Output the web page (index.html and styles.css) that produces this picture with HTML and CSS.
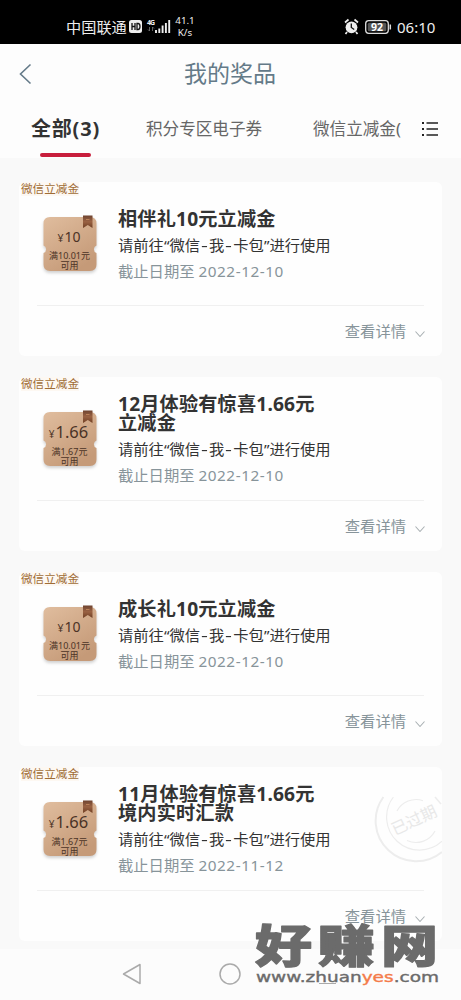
FILE: index.html
```html
<!DOCTYPE html>
<html lang="zh-CN">
<head>
<meta charset="utf-8">
<title>我的奖品</title>
<link rel="stylesheet" href="styles.css">
</head>
<body>
<svg class="defs" width="0" height="0" aria-hidden="true">
  <defs>
    <linearGradient id="gold" x1="0" y1="0" x2="0.6" y2="1">
      <stop offset="0" stop-color="#e0bd9e"/><stop offset="1" stop-color="#c59a78"/>
    </linearGradient>
    <linearGradient id="brown" x1="0" y1="0" x2="0" y2="1">
      <stop offset="0" stop-color="#6f4430"/><stop offset="0.5" stop-color="#9a6243"/><stop offset="1" stop-color="#6f3f24"/>
    </linearGradient>
    <symbol id="ticket" viewBox="0 0 58 62">
      <path d="M8 3H48Q54.500 3 54.500 9.500V31.500A4 4 0 0 0 54.500 39V50.500Q54.500 57 48 57H8Q1.500 57 1.500 50.500V39A4 4 0 0 0 1.500 31.500V9.500Q1.500 3 8 3Z" fill="url(#gold)"/>
      <path d="M41 1.500H50.500V14L45.800 11L41 14Z" fill="url(#brown)"/>
      <path d="M44 5.500H47.500" stroke="#b98058" stroke-width="1"/>
    </symbol>
    <symbol id="down" viewBox="0 0 12 8"><path d="M1.500 1.500L6 6.500L10.500 1.500" fill="none" stroke="#a9b0b3" stroke-width="1.100"/></symbol>
  </defs>
</svg>
<div class="phone">
  <header class="status">
    <span class="carrier">中国联通</span>
    <svg class="signal" width="43" height="22" viewBox="0 0 43 22">
      <rect x="0" y="4" width="13" height="13" rx="2.500" fill="#eee"/>
      <path d="M3 7V14M6 7V14M3 10.500H6M8 7.500V13.500H9Q11 13.500 11 10.500T9 7.500Z" fill="none" stroke="#111" stroke-width="1.300"/>
      <text x="18" y="8.800" class="net" textLength="8">4G</text>
      <path d="M20.500 11V15L19 13.500M23.500 15V11L25 12.500" fill="none" stroke="#777" stroke-width="0.800"/>
      <path d="M27 14V17M30.300 12.500V17M33.600 9.500V17M36.900 7V17M40.200 4V17" stroke="#eee" stroke-width="1.900"/>
    </svg>
    <span class="speed">41.1<br>K/s</span>
    <svg class="sys" width="48" height="20" viewBox="0 0 48 20">
      <circle cx="7.500" cy="10.300" r="5.900" fill="#eee"/>
      <path d="M1 5.500L4.500 2.500M14 5.500L10.500 2.500M3 15L1.500 17M12 15L13.500 17" stroke="#eee" stroke-width="1.700"/>
      <path d="M7.300 6.500V10.500L10.200 12.500" fill="none" stroke="#111" stroke-width="1.300"/>
      <rect x="21.700" y="3.700" width="22.600" height="12.600" rx="3" fill="none" stroke="#ddd" stroke-width="1.300"/>
      <rect x="23.800" y="5.700" width="18.500" height="8.600" rx="1.500" fill="#555"/>
      <path d="M46.300 7.500V12.500" stroke="#ddd" stroke-width="1.500"/>
      <text x="33" y="13.600" class="battery" text-anchor="middle">92</text>
    </svg>
    <span class="clock">06:10</span>
  </header>
  <div class="titlebar">
    <svg class="back" width="14" height="22" viewBox="0 0 14 22"><path d="M11.500 1.500L1.500 11L11.500 20.500" fill="none" stroke="#647a88" stroke-width="1.600"/></svg>
    <h1>我的奖品</h1>
  </div>
  <nav class="tabs">
    <div class="tab active">全部(3)</div>
    <div class="tab area">积分专区电子券</div>
    <div class="tab wx">微信立减金(</div>
    <svg class="list" width="18" height="16" viewBox="0 0 18 16"><path d="M5.500 2H17M5.500 8H17M5.500 14H17" stroke="#222" stroke-width="1.600"/><path d="M1 2H3M1 8H3M1 14H3" stroke="#222" stroke-width="2"/></svg>
  </nav>
  <main class="cards">
    <article class="card">
      <span class="tag">微信立减金</span>
      <div class="body">
        <div class="coupon"><svg width="58" height="62"><use href="#ticket"/></svg><div class="face"><b><i>¥</i>10</b><p>满10.01元<br>可用</p></div></div>
        <div class="info"><h2>相伴礼10元立减金</h2><p class="use">请前往“微信<s>-</s>我<s>-</s>卡包”进行使用</p><p class="date">截止日期至 <span>2022-12-10</span></p></div>
      </div>
      <div class="more">查看详情<svg width="12" height="8"><use href="#down"/></svg></div>
    </article>
    <article class="card">
      <span class="tag">微信立减金</span>
      <div class="body">
        <div class="coupon wide"><svg width="58" height="62"><use href="#ticket"/></svg><div class="face"><b><i>¥</i>1.66</b><p>满1.67元<br>可用</p></div></div>
        <div class="info"><h2>12月体验有惊喜1.66元<br>立减金</h2><p class="use">请前往“微信<s>-</s>我<s>-</s>卡包”进行使用</p><p class="date">截止日期至 <span>2022-12-10</span></p></div>
      </div>
      <div class="more">查看详情<svg width="12" height="8"><use href="#down"/></svg></div>
    </article>
    <article class="card">
      <span class="tag">微信立减金</span>
      <div class="body">
        <div class="coupon"><svg width="58" height="62"><use href="#ticket"/></svg><div class="face"><b><i>¥</i>10</b><p>满10.01元<br>可用</p></div></div>
        <div class="info"><h2>成长礼10元立减金</h2><p class="use">请前往“微信<s>-</s>我<s>-</s>卡包”进行使用</p><p class="date">截止日期至 <span>2022-12-10</span></p></div>
      </div>
      <div class="more">查看详情<svg width="12" height="8"><use href="#down"/></svg></div>
    </article>
    <article class="card">
      <span class="tag">微信立减金</span>
      <svg class="stamp" width="68" height="86" viewBox="0 0 68 86">
        <g fill="none" stroke="#ededed">
          <path d="M9.400 20A40.500 40.500 0 0 0 68 75" stroke-width="2"/>
          <path d="M19.400 20A33 33 0 0 0 68 64.300" stroke-width="1.200"/>
          <path d="M23 34A21.500 21.500 0 0 1 49 23.700M33 63.500A21.500 21.500 0 0 0 61 54" stroke-width="1.200"/>
          <path d="M61 20L67 27" stroke-width="1.500"/>
        </g>
        <text x="40" y="49" text-anchor="middle" transform="rotate(-25 40 43)">已过期</text>
      </svg>
      <div class="body">
        <div class="coupon wide"><svg width="58" height="62"><use href="#ticket"/></svg><div class="face"><b><i>¥</i>1.66</b><p>满1.67元<br>可用</p></div></div>
        <div class="info"><h2>11月体验有惊喜1.66元<br>境内实时汇款</h2><p class="use">请前往“微信<s>-</s>我<s>-</s>卡包”进行使用</p><p class="date">截止日期至 <span>2022-11-12</span></p></div>
      </div>
      <div class="more">查看详情<svg width="12" height="8"><use href="#down"/></svg></div>
    </article>
  </main>
  <footer class="sysnav">
    <svg width="22" height="24" viewBox="0 0 22 24"><path d="M19 2.500V21.500L2.500 12Z" fill="none" stroke="#aaa" stroke-width="1.500" stroke-linejoin="round"/></svg>
    <svg width="24" height="24" viewBox="0 0 24 24"><circle cx="12" cy="12" r="10" fill="none" stroke="#aaa" stroke-width="1.500"/></svg>
    <svg width="22" height="24" viewBox="0 0 22 24"><path d="M2 21.500H19" fill="none" stroke="#aaa" stroke-width="1"/></svg>
  </footer>
  <svg class="watermark" width="190" height="80" viewBox="0 0 190 80">
    <text class="brand" transform="translate(3 53.500) scale(1 0.800)" x="0 63 126" y="0">好赚网</text>
    <text class="site" x="4" y="73" textLength="183" lengthAdjust="spacingAndGlyphs">www.zhuan<tspan class="hot">yes</tspan>.com</text>
  </svg>
</div>
</body>
</html>
```
FILE: styles.css
```css
* { box-sizing: border-box; margin: 0; padding: 0; }
body { background: #f9f9f9; font-family: "Noto Sans", "Noto Sans CJK SC", sans-serif; color: #333; }
.defs { position: absolute; }
.phone { position: relative; width: 461px; height: 1000px; overflow: hidden; display: flex; flex-direction: column; }
svg { display: block; flex: none; }

.status { height: 44px; flex: none; background: #000; color: #eee; display: flex; align-items: center; padding: 10px 25px 0 66px; white-space: nowrap; }
.carrier { font-size: 15.2px; width: 63px; line-height: 20px; }
.net { font: bold 7px "Noto Sans", sans-serif; fill: #eee; }
.speed { font-size: 9.8px; line-height: 12px; margin-left: 2px; width: 22px; text-align: center; }
.sys { margin-left: auto; }
.battery { font: bold 10.5px "Noto Sans", sans-serif; fill: #fff; }
.clock { font-size: 15px; line-height: 20px; margin-left: 5px; width: 39px; }

.titlebar { height: 60px; flex: none; background: #fdfdfd; display: flex; align-items: center; padding-left: 19px; }
.titlebar h1 { flex: 1; margin: -3px 34px 0 0; text-align: center; font-size: 23px; line-height: 30px; font-weight: 400; color: #647a88; }

.tabs { height: 54px; flex: none; background: #fdfdfd; display: flex; padding: 9px 0 0 31px; white-space: nowrap; line-height: 32px; }
.tab { font-size: 16.6px; color: #666; }
.tab.active { width: 115px; height: 45px; font-size: 20px; letter-spacing: .8px; font-weight: 700; color: #333; }
.tab.active::after { content: ""; display: block; width: 51px; height: 4px; border-radius: 2px; margin: 8px 0 0 9px; background: #c81e3c; }
.tab.area { width: 167px; }
.tab.wx { width: 88px; }
.list { margin: 8px 0 0 20px; }

.cards { padding: 24px 19px 0; display: grid; gap: 21px; flex: none; }
.card { position: relative; height: 174px; border-radius: 6px; background: #fefefe; overflow: hidden; }
.tag { position: absolute; left: 2px; top: 0; font-size: 11.6px; line-height: 14px; color: #a06c35; background: #fdf8f2; }
.body { height: 124px; margin: 0 18px; border-bottom: 1px solid #f0f0f0; display: flex; align-items: center; padding-top: 5px; }
.coupon { position: relative; width: 58px; height: 62px; margin: -3px 0 0 5px; }
.coupon svg { filter: drop-shadow(0 2px 1.5px rgba(0,0,0,.18)); }
.face { position: absolute; inset: 12px 0 0; text-align: center; color: #4b3326; }
.face b { display: block; font-weight: 400; font-size: 14px; line-height: 22px; padding-right: 4px; }
.face i { font-style: normal; font-size: 10.5px; margin-right: 1px; }
.wide .face b { font-size: 16.5px; line-height: 22px; padding-right: 5px; }
.wide .face i { font-size: 10px; }
.face p { font-size: 9px; line-height: 10px; margin-top: 2px; padding-right: 3px; }
.info { margin-left: 18px; white-space: nowrap; }
.info h2 { font-size: 19.2px; line-height: 19px; letter-spacing: .15px; font-weight: 700; margin-bottom: 4px; color: #333; }
.use, .date { font-size: 15.3px; line-height: 26px; }
.use s { text-decoration: none; display: inline-block; width: 9px; text-align: center; transform: scaleX(1.4); }
.date { color: #87949a; }
.date span { letter-spacing: .55px; }
.more { display: flex; align-items: center; justify-content: flex-end; gap: 8px; height: 47px; padding-right: 16px; font-size: 15.3px; color: #87949a; }
.more svg { margin-top: 9px; }
.stamp { position: absolute; right: 0; top: 10px; }
.stamp text { font: 16px "Noto Sans CJK SC", sans-serif; fill: #e8e8e8; }

.sysnav { margin-top: 8px; flex: 1; background: #fcfcfc; display: flex; align-items: center; padding: 0 0 1px 121px; gap: 75px; }
.watermark { position: absolute; left: 252px; top: 909px; }
.brand { font: 900 57px "Noto Sans CJK SC", sans-serif; fill: #6b6b6b; stroke: #6b6b6b; stroke-width: 1.5; stroke-linejoin: round; }
.site { font: 14.5px "DejaVu Sans", sans-serif; fill: #6b6b6b; stroke: #6b6b6b; stroke-width: .4; }
.hot { fill: #f47b4a; stroke: #f47b4a; }
```
